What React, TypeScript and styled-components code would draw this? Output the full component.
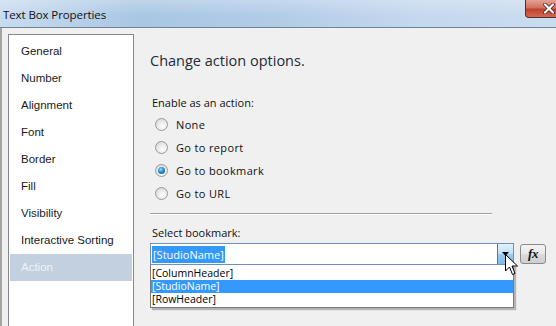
import React from "react";
import styled, { createGlobalStyle } from "styled-components";

const Global = createGlobalStyle`
  html, body { margin: 0; padding: 0; background: #f0f0f0; }
  body { width: 556px; height: 326px; overflow: hidden; }
`;

const Dialog = styled.div`
  position: relative;
  width: 556px;
  height: 326px;
  overflow: hidden;
  display: flex;
  flex-direction: column;
  background: #f0f0f0;
  font-family: "Open Sans", "Liberation Sans", sans-serif;
`;

const TitleBar = styled.div`
  height: 27px;
  flex: none;
  display: flex;
  align-items: center;
  justify-content: space-between;
  padding-left: 3px;
  border-bottom: 1px solid #6f8296;
  background:
    linear-gradient(to bottom, rgba(255,255,255,0.25), rgba(255,255,255,0) 60%),
    linear-gradient(to right, #c8dcef 0%, #a9c6e4 25%, #b2cce8 50%, #c4d8ee 75%, #cadcef 100%);
`;

const Title = styled.span`
  font-family: "Open Sans", sans-serif;
  font-size: 11.5px;
  color: #111;
  letter-spacing: -0.1px;
  margin-top: 1px;
`;

const CloseButton = styled.div`
  align-self: flex-start;
  width: 34px;
  height: 18px;
  margin-right: -3px;
  border: 1px solid #5a2a2a;
  border-top: none;
  border-radius: 0 0 0 4px;
  background: linear-gradient(to bottom, #e5a296 0%, #d2705f 45%, #c0422e 55%, #d26a4f 100%);
  display: flex;
  align-items: center;
  justify-content: flex-start;
  padding-left: 17px;
  box-sizing: border-box;
`;

const Body = styled.div`
  flex: 1;
  display: flex;
  padding: 6px 0 0 6px;
  border-left: 2px solid #a4a4a4;
  min-height: 0;
`;

const NavList = styled.div`
  width: 126px;
  flex: none;
  box-sizing: border-box;
  background: #fff;
  border: 1px solid #828790;
  border-bottom: none;
  padding: 3px 1px 0 1px;
  display: flex;
  flex-direction: column;
`;

const NavItem = styled.div<{ $active?: boolean }>`
  height: 27px;
  line-height: 27px;
  padding-left: 11px;
  font-family: "Liberation Sans", Arial, sans-serif;
  font-size: 11.5px;
  color: ${(p) => (p.$active ? "#eef3f8" : "#1a1a1a")};
  background: ${(p) => (p.$active ? "#c2d0df" : "transparent")};
`;

const Main = styled.div`
  flex: 1;
  padding: 16px 0 0 16px;
  display: flex;
  flex-direction: column;
`;

const Heading = styled.div`
  font-size: 14.5px;
  line-height: 22px;
  color: #1e2b39;
  margin: 0 0 23px 0;
`;

const Label = styled.div`
  font-size: 11px;
  line-height: 16px;
  color: #111;
  padding-left: 2px;
`;

const RadioGroup = styled.div`
  display: flex;
  flex-direction: column;
  padding: 2px 0 0 5px;
`;

const RadioRow = styled.div`
  height: 23px;
  display: flex;
  align-items: center;
  gap: 8px;
`;

const RadioCircle = styled.div<{ $checked?: boolean }>`
  width: 13px;
  height: 13px;
  box-sizing: border-box;
  border-radius: 50%;
  border: 1px solid #9a9a9a;
  background: radial-gradient(circle at 60% 65%, #ffffff 0%, #e6e6e6 55%, #cfcfcf 100%);
  display: flex;
  align-items: center;
  justify-content: center;
  &::after {
    content: "";
    display: ${(p) => (p.$checked ? "block" : "none")};
    width: 7px;
    height: 7px;
    border-radius: 50%;
    background: radial-gradient(circle at 40% 35%, #9fdcff 0%, #2a8ad0 45%, #0b4f8a 100%);
  }
`;

const RadioLabel = styled.span`
  font-size: 11px;
  letter-spacing: 0.35px;
  color: #111;
`;

const Separator = styled.div`
  width: 342px;
  height: 1px;
  background: #a0a0a0;
  margin: 8px 0 10px 0;
  border-bottom: 1px solid #fff;
`;

const ComboRow = styled.div`
  margin-top: 2px;
  display: flex;
  align-items: center;
  gap: 6px;
  position: relative;
`;

const Combo = styled.div`
  position: relative;
  width: 364px;
  height: 22px;
  box-sizing: border-box;
  border: 1px solid #6f91b8;
  background: #fff;
  display: flex;
  align-items: center;
  padding-left: 1px;
`;

const SelectedText = styled.span`
  font-size: 11px;
  line-height: 17px;
  padding: 0 1px;
  background: #3399ff;
  color: #fff;
`;

const ArrowButton = styled.div`
  position: absolute;
  right: 0;
  top: 0;
  bottom: 0;
  width: 16px;
  box-sizing: border-box;
  border-left: 1px solid #3c7fb1;
  background: linear-gradient(to bottom, #e3f1fc 0%, #bfe0f8 50%, #9bcdf2 51%, #7fb8e6 100%);
  display: flex;
  align-items: center;
  justify-content: center;
`;

const DropList = styled.div`
  position: absolute;
  left: -1px;
  top: 21px;
  width: 364px;
  box-sizing: border-box;
  background: #fff;
  border: 1px solid #7a7a7a;
  border-top: none;
  box-shadow: 2px 2px 1px rgba(0, 0, 0, 0.25);
  padding: 2px 0 1px 0;
  z-index: 2;
`;

const DropItem = styled.div<{ $selected?: boolean }>`
  height: 13px;
  line-height: 13px;
  font-size: 10.5px;
  padding-left: 1px;
  overflow: hidden;
  color: ${(p) => (p.$selected ? "#fff" : "#000")};
  background: ${(p) => (p.$selected ? "#3399ff" : "transparent")};
`;

const FxButton = styled.div`
  width: 26px;
  height: 20px;
  box-sizing: border-box;
  border: 1px solid #8a8a8a;
  border-radius: 3px;
  background: linear-gradient(to bottom, #f4f4f4 0%, #e8e8e8 50%, #dcdcdc 51%, #cfcfcf 100%);
  display: flex;
  align-items: center;
  justify-content: center;
  font-family: "Liberation Serif", "Times New Roman", serif;
  font-style: italic;
  font-weight: bold;
  font-size: 13px;
  color: #111;
  letter-spacing: -0.5px;
`;

const Cursor = styled.svg`
  position: absolute;
  left: 505px;
  top: 254px;
  z-index: 5;
`;

const navItems = [
  "General",
  "Number",
  "Alignment",
  "Font",
  "Border",
  "Fill",
  "Visibility",
  "Interactive Sorting",
  "Action",
];

const radios = [
  { label: "None", checked: false },
  { label: "Go to report", checked: false },
  { label: "Go to bookmark", checked: true },
  { label: "Go to URL", checked: false },
];

export default function App() {
  return (
    <>
      <Global />
      <Dialog>
        <TitleBar>
          <Title>Text Box Properties</Title>
          <CloseButton>
            <svg width="12" height="11" viewBox="0 0 12 11">
              <path d="M2 1.5 L10 9.5 M10 1.5 L2 9.5" stroke="#4a1a1a" strokeWidth="3.6" strokeLinecap="round" />
              <path d="M2 1.5 L10 9.5 M10 1.5 L2 9.5" stroke="#ffffff" strokeWidth="2.2" strokeLinecap="round" />
            </svg>
          </CloseButton>
        </TitleBar>
        <Body>
          <NavList>
            {navItems.map((n) => (
              <NavItem key={n} $active={n === "Action"}>
                {n}
              </NavItem>
            ))}
          </NavList>
          <Main>
            <Heading>Change action options.</Heading>
            <Label>Enable as an action:</Label>
            <RadioGroup>
              {radios.map((r) => (
                <RadioRow key={r.label}>
                  <RadioCircle $checked={r.checked} />
                  <RadioLabel>{r.label}</RadioLabel>
                </RadioRow>
              ))}
            </RadioGroup>
            <Separator />
            <Label>Select bookmark:</Label>
            <ComboRow>
              <Combo>
                <SelectedText>[StudioName]</SelectedText>
                <ArrowButton>
                  <svg width="7" height="4" viewBox="0 0 7 4">
                    <path d="M0 0 L7 0 L3.5 4 Z" fill="#000" />
                  </svg>
                </ArrowButton>
                <DropList>
                  <DropItem>[ColumnHeader]</DropItem>
                  <DropItem $selected>[StudioName]</DropItem>
                  <DropItem>[RowHeader]</DropItem>
                </DropList>
              </Combo>
              <FxButton>fx</FxButton>
            </ComboRow>
          </Main>
        </Body>
        <Cursor width="14" height="22" viewBox="0 0 14 22">
          <path d="M0.5 0.5 L0.5 17 L4.5 13 L7.5 20.5 L10 19.5 L7 12 L12.5 12 Z" fill="#fff" stroke="#000" strokeWidth="1" strokeLinejoin="miter" />
        </Cursor>
      </Dialog>
    </>
  );
}
